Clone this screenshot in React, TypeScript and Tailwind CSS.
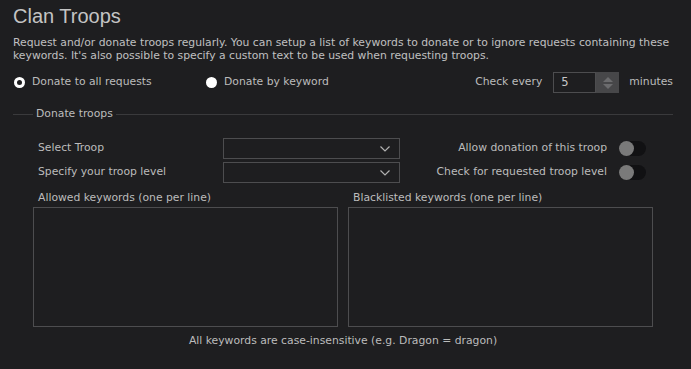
import React from "react";

const font = { fontFamily: '"DejaVu Sans", Verdana, sans-serif' };

function Chevron() {
  return (
    <svg width="12" height="8" viewBox="0 0 12 8" className="mr-[8px]">
      <path d="M1.5 1.5 L6 6 L10.5 1.5" fill="none" stroke="#b0b0b0" strokeWidth="1.2" />
    </svg>
  );
}

function Select() {
  return (
    <div className="w-[177px] h-[21px] border border-[#4d4d4f] flex items-center justify-end">
      <Chevron />
    </div>
  );
}

function Toggle() {
  return (
    <div className="w-[27px] h-[15px] rounded-full bg-[#111113] flex items-center">
      <div className="w-[15px] h-[15px] rounded-full bg-[#7a7a7a]" />
    </div>
  );
}

export default function App() {
  return (
    <div
      className="w-[691px] h-[369px] bg-[#1e1e20] text-[#bcbcbc] overflow-hidden pl-[13px] pr-[18px] pt-[3px] text-[10.8px]"
      style={font}
    >
      <div
        className="text-[20px] leading-[26px] text-[#c4c4c4]"
        style={{ fontFamily: '"Liberation Sans", Arial, sans-serif' }}
      >
        Clan Troops
      </div>
      <div className="mt-[7px] leading-[13px] text-[#c0c0c0] whitespace-nowrap">
        Request and/or donate troops regularly. You can setup a list of keywords to donate or to ignore requests containing these
        <br />
        keywords. It's also possible to specify a custom text to be used when requesting troops.
      </div>
      <div className="mt-[10px] h-[21px] flex items-center">
        <div className="flex items-center w-[193px]">
          <div className="w-[11px] h-[11px] rounded-full bg-white flex items-center justify-center ml-[1px]">
            <div className="w-[5px] h-[5px] rounded-full bg-[#1e1e20]" />
          </div>
          <span className="ml-[7px]">Donate to all requests</span>
        </div>
        <div className="flex items-center">
          <div className="w-[11px] h-[11px] rounded-full bg-white" />
          <span className="ml-[7px]">Donate by keyword</span>
        </div>
        <div className="flex-1" />
        <span>Check every</span>
        <div className="ml-[11px] flex h-[21px] w-[66px]">
          <div className="flex-1 border border-[#4d4d4f] flex items-center pl-[7px] text-[11.5px] text-[#c8c8c8]">
            5
          </div>
          <div className="w-[23px] bg-[#474749] flex flex-col items-center justify-center gap-[2px]">
            <svg width="10" height="5" viewBox="0 0 10 5">
              <path d="M0 5 L5 0 L10 5 Z" fill="#6c6c6e" />
            </svg>
            <svg width="10" height="5" viewBox="0 0 10 5">
              <path d="M0 0 L5 5 L10 0 Z" fill="#6c6c6e" />
            </svg>
          </div>
        </div>
        <span className="ml-[10px]">minutes</span>
      </div>
      <div className="mt-[14px] flex items-center h-[14px]">
        <div className="w-[20px] h-px bg-[#3a3a3c]" />
        <span className="mx-[3px]">Donate troops</span>
        <div className="flex-1 h-px bg-[#3a3a3c]" />
      </div>
      <div className="pl-[20px] pr-[20px]">
        <div className="mt-[17px] flex flex-col gap-[3px] pr-[7px]">
          <div className="flex items-center h-[21px]">
            <span className="w-[190px] pl-[5px]">Select Troop</span>
            <Select />
            <div className="flex-1 flex justify-end items-center">
              <span className="mr-[12px]">Allow donation of this troop</span>
              <Toggle />
            </div>
          </div>
          <div className="flex items-center h-[21px]">
            <span className="w-[190px] pl-[5px]">Specify your troop level</span>
            <Select />
            <div className="flex-1 flex justify-end items-center">
              <span className="mr-[12px]">Check for requested troop level</span>
              <Toggle />
            </div>
          </div>
        </div>
        <div className="mt-[6px] flex gap-[10px] w-[620px]">
          <div className="flex-1 flex flex-col">
            <span className="pl-[5px] leading-[18px]">Allowed keywords (one per line)</span>
            <div className="h-[120px] border border-[#4d4d4f]" />
          </div>
          <div className="flex-1 flex flex-col">
            <span className="pl-[5px] leading-[18px]">Blacklisted keywords (one per line)</span>
            <div className="h-[120px] border border-[#4d4d4f]" />
          </div>
        </div>
        <div className="w-[620px] text-center mt-[6px]">
          All keywords are case-insensitive (e.g. Dragon = dragon)
        </div>
      </div>
    </div>
  );
}
